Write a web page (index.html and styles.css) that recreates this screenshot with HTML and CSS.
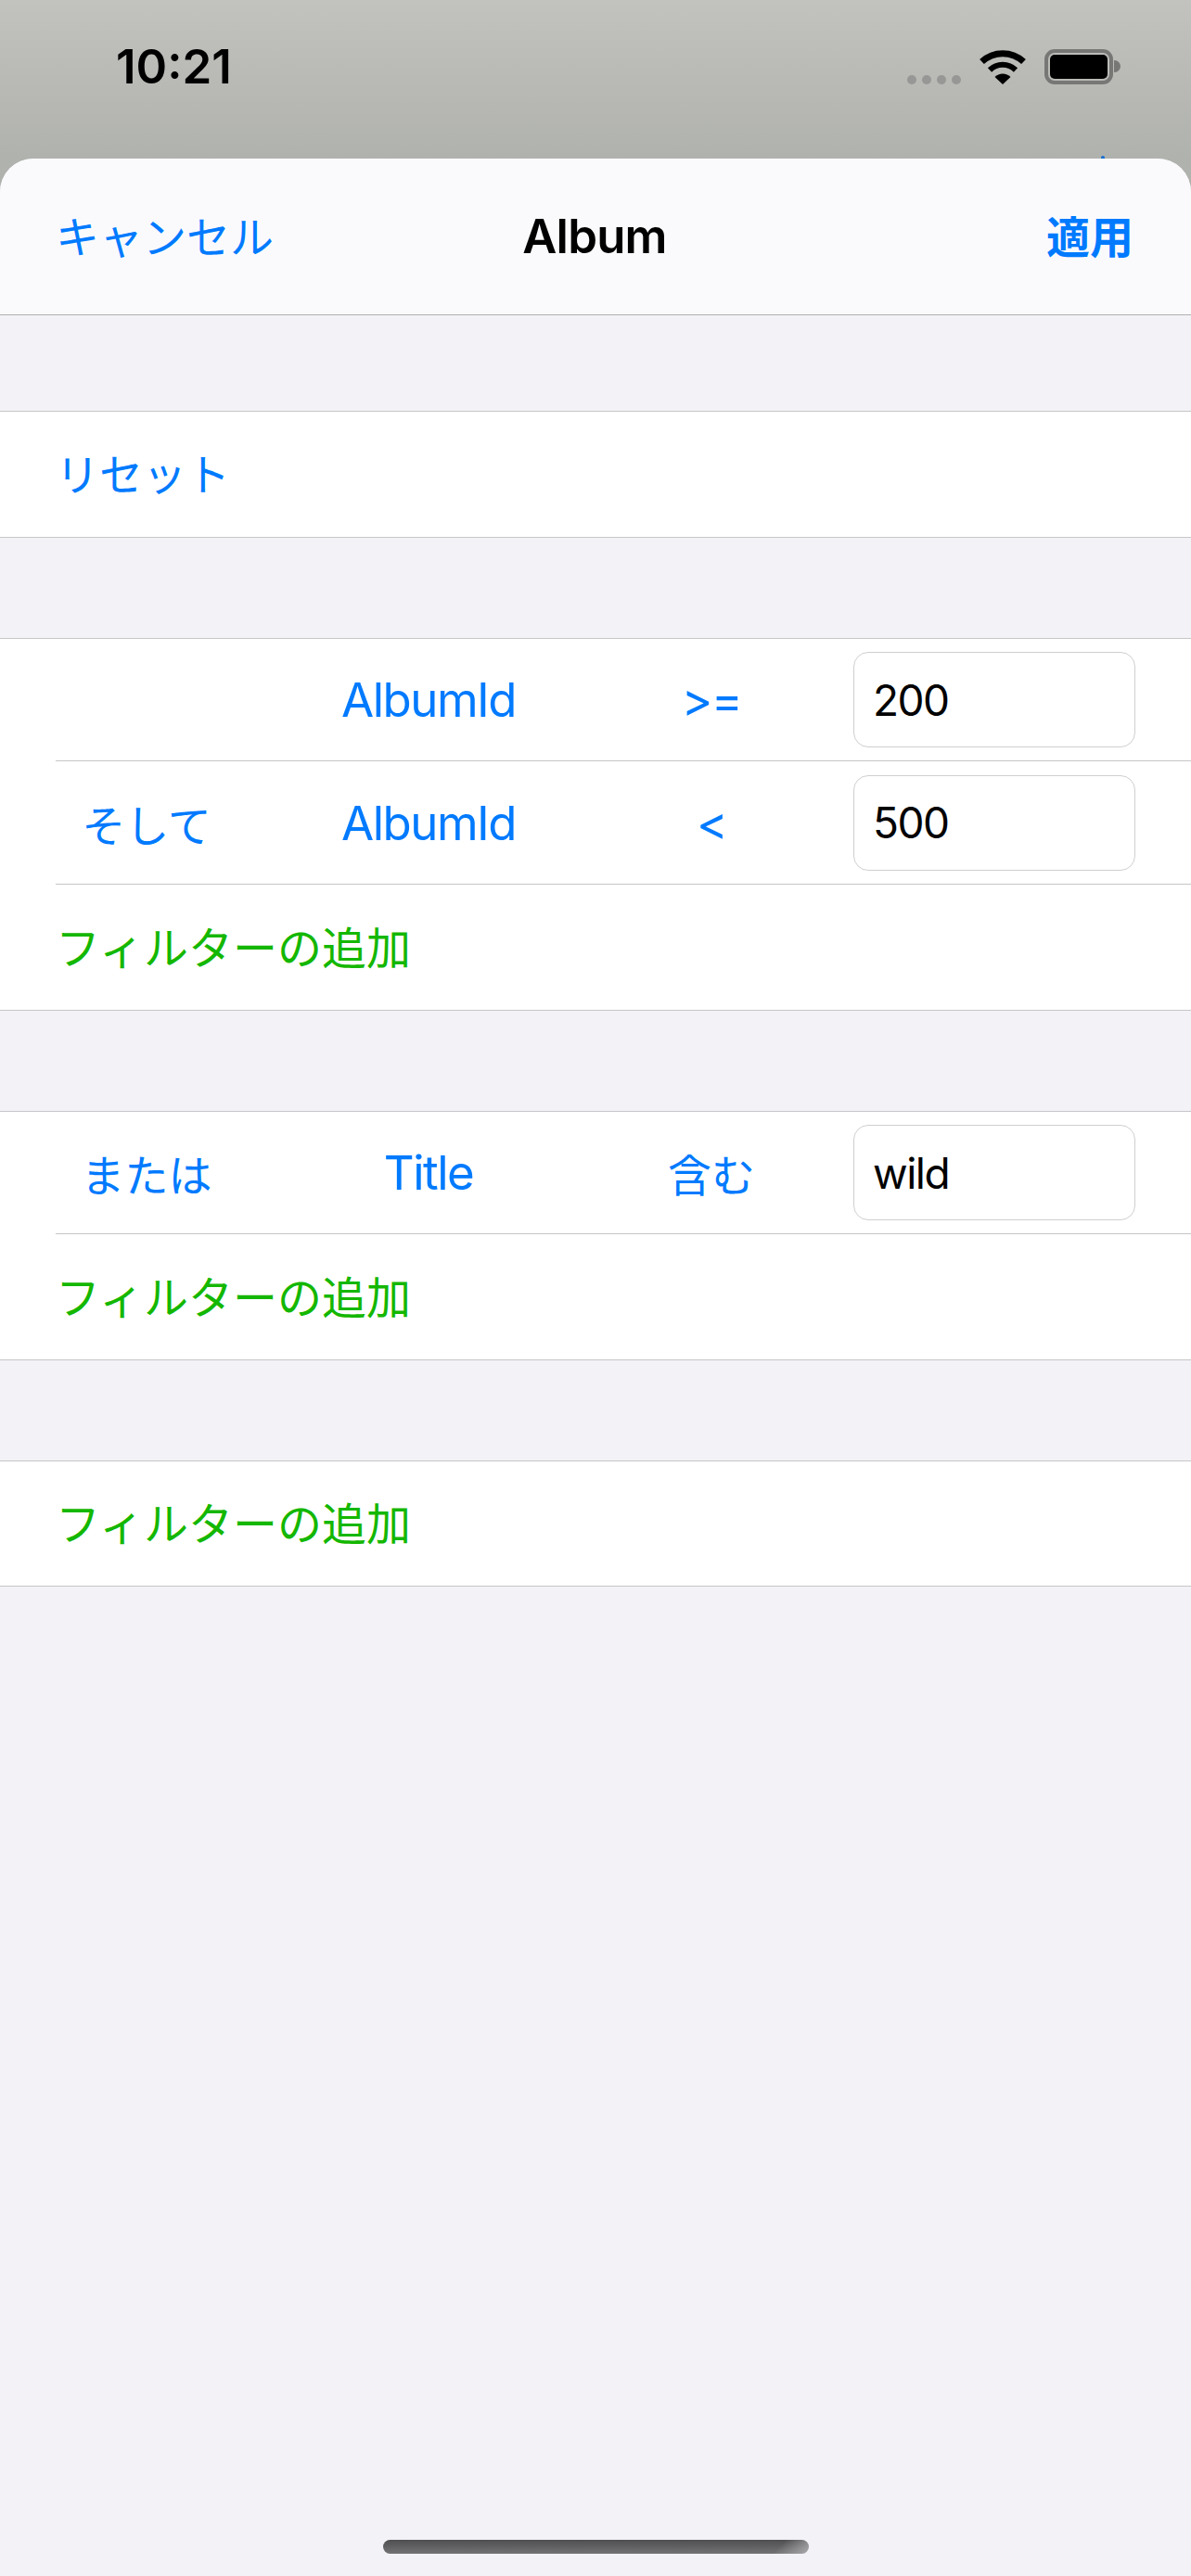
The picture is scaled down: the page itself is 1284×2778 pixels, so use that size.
FILE: index.html
```html
<!DOCTYPE html>
<html lang="ja">
<head>
  <meta charset="UTF-8">
  <meta name="viewport" content="width=device-width, initial-scale=1.0">
  <title>Album</title>
  <link rel="stylesheet" href="styles.css">
</head>
<body>

  <div class="status-bar">
    <div class="time">10:21</div>
    <div class="status-icons">
      <div class="signal"><i></i><i></i><i></i><i></i></div>
      <svg class="wifi" width="50" height="37" viewBox="0 0 50 37">
        <path d="M2.5 12.5A33 33 0 0 1 47.5 12.5" fill="none" stroke="#000" stroke-width="7"/>
        <path d="M11 21.5A20 20 0 0 1 39 21.5" fill="none" stroke="#000" stroke-width="6"/>
        <path d="M25 37L16.5 29A12 12 0 0 1 33.5 29Z" fill="#000"/>
      </svg>
      <div class="battery"><div class="battery-fill"></div></div>
      <div class="battery-cap"></div>
    </div>
  </div>

  <div class="sheet">
    <span class="peek"></span>

    <div class="nav">
      <a class="nav-left">キャンセル</a>
      <div class="nav-title">Album</div>
      <a class="nav-right">適用</a>
    </div>

    <div class="section first">
      <div class="row"><a class="link-ja">リセット</a></div>
    </div>

    <div class="section">
      <div class="filter-row">
        <a class="join"></a>
        <a class="link">AlbumId</a>
        <a class="link">&gt;=</a>
        <input type="text" value="200">
      </div>
      <div class="filter-row tall">
        <a class="join">そして</a>
        <a class="link">AlbumId</a>
        <a class="link">&lt;</a>
        <input type="text" value="500">
      </div>
      <div class="row"><a class="add">フィルターの追加</a></div>
    </div>

    <div class="section">
      <div class="filter-row">
        <a class="join">または</a>
        <a class="link">Title</a>
        <a class="link-ja">含む</a>
        <input type="text" value="wild">
      </div>
      <div class="row"><a class="add">フィルターの追加</a></div>
    </div>

    <div class="section">
      <div class="row last"><a class="add">フィルターの追加</a></div>
    </div>

    <div class="home-bar"></div>
  </div>

</body>
</html>
```

FILE: styles.css
```css
html, body {
  margin: 0;
  height: 100%;
}

body {
  width: 1284px;
  height: 2778px;
  overflow: hidden;
  display: flex;
  flex-direction: column;
  font-family: Inter, "Noto Sans CJK JP", sans-serif;
  font-size: 47px;
  color: #000;
  background: linear-gradient(#c2c2bf, #b0b2ad 171px);
}

.status-bar {
  height: 171px;
  flex: none;
  display: flex;
  justify-content: space-between;
  box-sizing: border-box;
  padding: 43px 76px 0 125px;
}

.time {
  font-size: 51px;
  font-weight: 600;
  line-height: 58px;
}

.status-icons {
  display: flex;
  align-items: flex-start;
  padding-top: 10px;
}

.signal {
  display: flex;
  gap: 6px;
  margin-top: 28px;
  margin-right: 20px;
}

.signal i {
  width: 10px;
  height: 10px;
  border-radius: 50%;
  background: #979896;
}

.wifi {
  margin-top: 1px;
  margin-right: 20px;
}

.battery {
  width: 74px;
  height: 38px;
  box-sizing: border-box;
  border: 4px solid #777876;
  border-radius: 11px;
  padding: 2px;
}

.battery-fill {
  height: 100%;
  background: #000;
  border-radius: 5px;
}

.battery-cap {
  width: 7px;
  height: 13px;
  margin: 12px 0 0 1px;
  background: #777876;
  border-radius: 0 7px 7px 0;
}

.sheet {
  position: relative;
  flex: 1;
  background: #f2f2f7;
  border-radius: 36px 36px 0 0;
}

.peek {
  position: absolute;
  left: 1187px;
  top: -3px;
  width: 4px;
  height: 3px;
  border-radius: 2px 2px 0 0;
  background: #1a6fd0;
}

.nav {
  height: 168px;
  display: grid;
  grid-template-columns: 1fr auto 1fr;
  align-items: center;
  padding: 0 62px 0 60px;
  background: #fafafd;
  border-bottom: 1px solid #b1b1b3;
  border-radius: 36px 36px 0 0;
}

.nav-left {
  color: #007aff;
  padding-bottom: 6px;
}

.nav-title {
  font-size: 51px;
  font-weight: 600;
  letter-spacing: -0.8px;
  padding-bottom: 2px;
}

.nav-right {
  color: #007aff;
  font-weight: 600;
  justify-self: end;
  padding-bottom: 6px;
}

.section {
  margin-top: 108px;
  background: #fff;
  border-top: 1px solid #c6c6c8;
  border-bottom: 1px solid #c6c6c8;
}

.section.first {
  margin-top: 103px;
}

.row {
  height: 135px;
  box-sizing: border-box;
  display: flex;
  align-items: center;
  padding: 0 0 6px 60px;
}

.row.last {
  height: 134px;
}

.link {
  font-size: 51px;
  letter-spacing: -1.5px;
  color: #007aff;
  text-align: center;
}

.link-ja {
  color: #007aff;
  text-align: center;
}

.add {
  font-size: 48px;
  color: #14b700;
}

.filter-row {
  height: 131px;
  margin-left: 60px;
  display: grid;
  grid-template-columns: 250px 304px 306px 304px;
  align-items: center;
  border-bottom: 1px solid #c6c6c8;
}

.filter-row.tall {
  height: 132px;
}

.join {
  width: 304px;
  margin-left: -54px;
  color: #007aff;
  text-align: center;
}

.filter-row input {
  width: 304px;
  height: 103px;
  box-sizing: border-box;
  padding: 0 0 0 20px;
  border: 1px solid #cfcfd0;
  border-radius: 16px;
  font-family: Inter, sans-serif;
  font-size: 46px;
  letter-spacing: -1.5px;
  color: #000;
  background: #fff;
  outline: none;
}

.home-bar {
  position: absolute;
  left: 413px;
  bottom: 24px;
  width: 459px;
  height: 15px;
  border-radius: 8px;
  background:
    linear-gradient(135deg, transparent calc(100% - 28px), #a9a9ab),
    linear-gradient(#4e4e50, #737375);
}
```
